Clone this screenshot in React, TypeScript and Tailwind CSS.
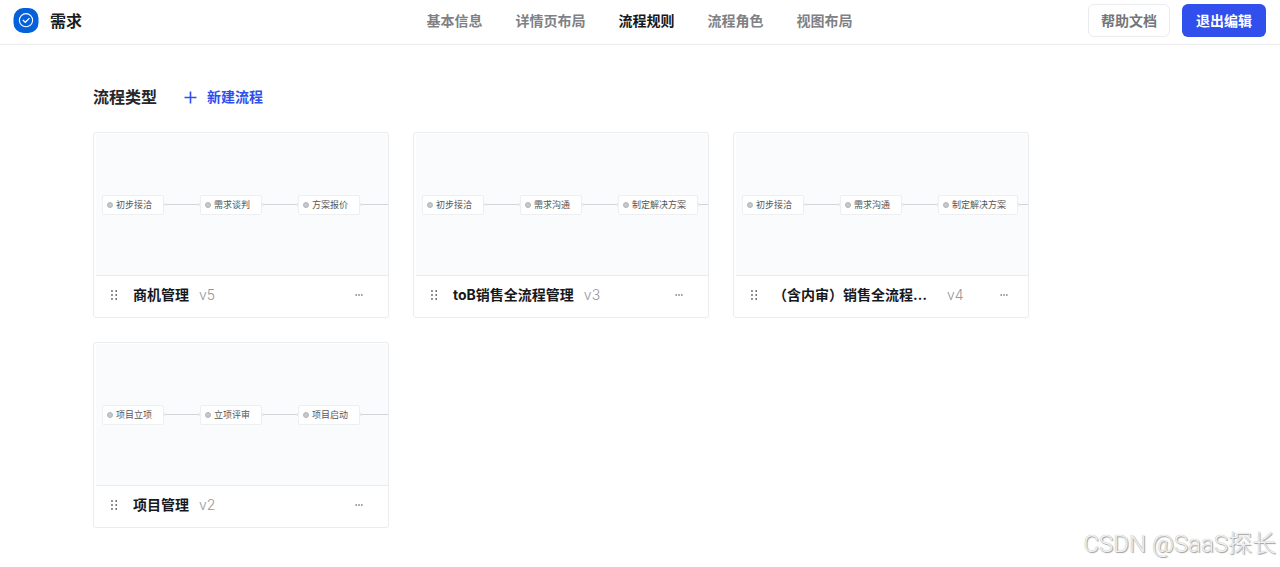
import { useState } from 'react';
import clsx from 'clsx';

interface Flow {
  id: string;
  name: string;
  version: string;
  steps: string[];
}

const TABS = ['基本信息', '详情页布局', '流程规则', '流程角色', '视图布局'];

const FLOWS: Flow[] = [
  { id: 'opportunity', name: '商机管理', version: 'v5', steps: ['初步接洽', '需求谈判', '方案报价'] },
  { id: 'tob', name: 'toB销售全流程管理', version: 'v3', steps: ['初步接洽', '需求沟通', '制定解决方案'] },
  { id: 'audit', name: '（含内审）销售全流程管理', version: 'v4', steps: ['初步接洽', '需求沟通', '制定解决方案'] },
  { id: 'project', name: '项目管理', version: 'v2', steps: ['项目立项', '立项评审', '项目启动'] },
];

function Logo() {
  return (
    <svg width="26" height="26" viewBox="0 0 26 26" fill="none" aria-hidden="true">
      <rect x="0.5" y="0" width="25" height="25" rx="10" fill="#0560dc" />
      <circle cx="13" cy="12.2" r="6.6" stroke="#fff" strokeWidth="1.1" />
      <path d="M9.8 12l2.5 2.3 4.2-4.2" stroke="#fff" strokeWidth="1.3" />
    </svg>
  );
}

function DragIcon() {
  return (
    <svg width="8" height="12" viewBox="0 0 8 12" fill="#5f6166" aria-hidden="true">
      {[2, 6, 10].map((y) => (
        <g key={y}>
          <circle cx="2" cy={y} r="0.9" />
          <circle cx="6.2" cy={y} r="0.9" />
        </g>
      ))}
    </svg>
  );
}

function Connector() {
  return (
    <svg width="36" height="4" viewBox="0 0 36 4" className="shrink-0" aria-hidden="true">
      <path d="M2 1.5h32" stroke="#d2d4d8" />
      <circle cx="0.5" cy="1.5" r="1.5" fill="#e6e7ea" />
      <circle cx="35.5" cy="1.5" r="1.5" fill="#e6e7ea" />
    </svg>
  );
}

function FlowPreview({ steps }: { steps: string[] }) {
  return (
    <div className="ml-0.5 mt-px flex h-[142px] items-center overflow-hidden border-b border-[#e9eaec] bg-[#fafbfd] pl-1.5">
      {steps.map((step) => (
        <div key={step} className="flex shrink-0 items-center">
          <div className="flex h-5 items-center gap-[3px] rounded-xs border border-[#eeeff1] bg-white pl-1 pr-[11px]">
            <span className="size-1.5 rounded-full border border-[#b4b5b9] bg-[#c6c7cb]" />
            <span className="text-[9px] leading-4 text-[#55565a]">{step}</span>
          </div>
          <Connector />
        </div>
      ))}
    </div>
  );
}

function FlowCard({ flow }: { flow: Flow }) {
  return (
    <article className="overflow-hidden rounded-[3px] border border-[#ebecee] bg-white">
      <FlowPreview steps={flow.steps} />
      <div className="flex h-[41px] items-center pb-1 pl-4">
        <button type="button" aria-label="拖动排序" className="mr-[15px] cursor-grab">
          <DragIcon />
        </button>
        <div className="flex min-w-[214px] items-center gap-[10px] pr-7">
          <h3 className="max-w-[164px] truncate text-sm font-bold text-[#17181c]">{flow.name}</h3>
          <span className="text-sm font-light text-[#96979b]">{flow.version}</span>
        </div>
        <button type="button" aria-label="更多操作" className="flex h-6 w-6 items-center justify-center">
          <svg width="8" height="2" viewBox="0 0 8 2" fill="#77797e" aria-hidden="true">
            <path d="M0.5 0.3h1.5v1.4H0.5zM3.3 0.3h1.5v1.4H3.3zM6.1 0.3h1.5v1.4H6.1z" />
          </svg>
        </button>
      </div>
    </article>
  );
}

export default function App() {
  const [activeTab, setActiveTab] = useState('流程规则');

  return (
    <div className="relative min-h-screen bg-white font-[Inter,'Noto_Sans_CJK_SC',sans-serif]">
      <header className="grid h-[45px] grid-cols-[1fr_auto_1fr] items-center border-b border-[#ececee] pb-[3px] pl-[13px] pr-3.5">
        <div className="flex items-center gap-[11px]">
          <Logo />
          <h1 className="text-base font-bold text-[#1b1c20]">需求</h1>
        </div>

        <nav className="flex gap-[33px]">
          {TABS.map((tab) => (
            <button
              key={tab}
              type="button"
              onClick={() => setActiveTab(tab)}
              className={clsx('text-sm font-bold', tab === activeTab ? 'text-[#17181c]' : 'text-[#808184]')}
            >
              {tab}
            </button>
          ))}
        </nav>

        <div className="flex justify-end gap-3">
          <a
            href="#help"
            className="flex h-[33px] items-center rounded-md border border-[#ebecee] px-3 text-sm font-bold text-[#747579]"
          >
            帮助文档
          </a>
          <button type="button" className="h-[33px] rounded-md bg-[#304fec] px-3.5 text-sm font-bold text-white">
            退出编辑
          </button>
        </div>
      </header>

      <main className="px-[93px] pb-10 pt-10">
        <div className="flex items-center gap-[27px]">
          <h2 className="text-base font-bold text-[#26272b]">流程类型</h2>
          <button type="button" className="flex items-center gap-2.5 text-sm font-bold text-[#304fec]">
            <svg width="13" height="13" viewBox="0 0 13 13" stroke="currentColor" strokeWidth="1.6" aria-hidden="true">
              <path d="M6.5 0.5v12M0.5 6.5h12" />
            </svg>
            新建流程
          </button>
        </div>

        <div className="mt-[23px] grid grid-cols-[repeat(auto-fill,296px)] gap-6">
          {FLOWS.map((flow) => (
            <FlowCard key={flow.id} flow={flow} />
          ))}
        </div>
      </main>

      <span className="absolute bottom-2 right-1 font-[Roboto,'Noto_Sans_CJK_SC',sans-serif] text-2xl font-light text-[#f0f0f0] [text-shadow:1px_1px_1px_#9c9c9c,0_0_1px_#b0b0b0]">
        CSDN @SaaS探长
      </span>
    </div>
  );
}
